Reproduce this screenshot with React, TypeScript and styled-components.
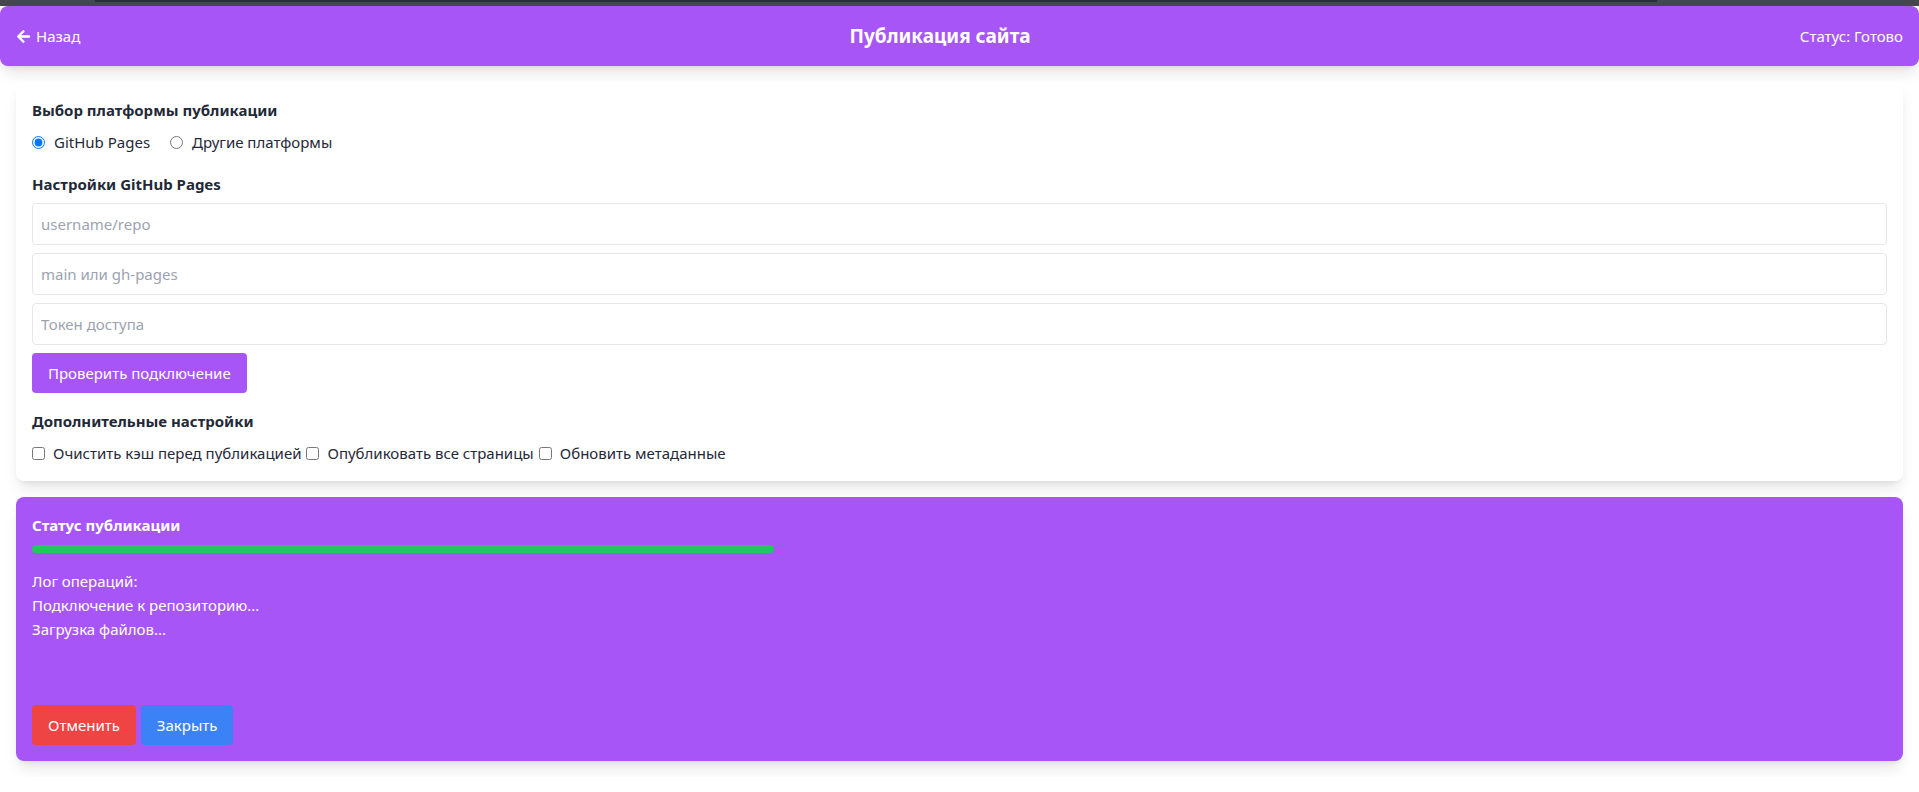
import React from "react";
import styled, { createGlobalStyle } from "styled-components";
import { FaArrowLeft } from "react-icons/fa";

const GlobalStyle = createGlobalStyle`
  html, body { margin: 0; padding: 0; background: #ffffff; }
  body {
    font-family: "Noto Sans", "Open Sans", Arial, sans-serif;
    font-size: 15px;
    line-height: 24px;
    color: #1f2937;
  }
  * { box-sizing: border-box; }
`;

const TopStrip = styled.div`
  height: 6px;
  background: #46464f;
  display: flex;
`;

const TopStripShade = styled.div`
  margin-left: 95px;
  width: 1562px;
  height: 2px;
  background: #2e2e35;
`;

const Header = styled.header`
  height: 60px;
  background: #a855f7;
  color: #ffffff;
  border-radius: 8px;
  padding: 0 16px;
  display: flex;
  align-items: center;
  justify-content: space-between;
  box-shadow: 0 10px 15px -3px rgba(0, 0, 0, 0.1), 0 4px 6px -4px rgba(0, 0, 0, 0.1);
`;

const BackLink = styled.a`
  display: flex;
  align-items: center;
  gap: 5px;
  color: #ffffff;
  text-decoration: none;
  font-size: 15px;
  cursor: pointer;
`;

const Title = styled.h1`
  margin: 0;
  font-size: 19px;
  line-height: 28px;
  font-weight: 700;
`;

const HeaderStatus = styled.div`
  font-size: 15px;
`;

const Main = styled.main`
  padding: 16px;
  display: flex;
  flex-direction: column;
  gap: 16px;
`;

const Card = styled.section<{ $accent?: boolean }>`
  background: ${(p) => (p.$accent ? "#a855f7" : "#ffffff")};
  color: ${(p) => (p.$accent ? "#ffffff" : "#1f2937")};
  border-radius: 8px;
  padding: 16px;
  display: flex;
  flex-direction: column;
  box-shadow: 0 10px 15px -3px rgba(0, 0, 0, 0.1), 0 4px 6px -4px rgba(0, 0, 0, 0.1);
`;

const SectionTitle = styled.h2<{ $mt?: number; $mb?: number }>`
  margin: ${(p) => p.$mt ?? 0}px 0 ${(p) => p.$mb ?? 8}px 0;
  font-size: 15px;
  line-height: 24px;
  font-weight: 700;
`;

const RadioRow = styled.div`
  display: flex;
  align-items: center;
  gap: 20px;
  margin-bottom: 18px;
`;

const OptionLabel = styled.label`
  display: flex;
  align-items: center;
  line-height: 24px;
  cursor: pointer;
`;

const Radio = styled.input.attrs({ type: "radio" })`
  width: 13px;
  height: 13px;
  margin: 0 9px 0 0;
`;

const Fields = styled.div`
  display: flex;
  flex-direction: column;
  gap: 8px;
`;

const TextInput = styled.input`
  height: 42px;
  width: 100%;
  border: 1px solid #e5e7eb;
  border-radius: 4px;
  padding: 0 8px;
  font-family: inherit;
  font-size: 15px;
  color: #1f2937;
  outline: none;
  &::placeholder { color: #9ca3af; }
`;

const Button = styled.button<{ $color: string }>`
  align-self: flex-start;
  height: 40px;
  padding: 0 16px;
  border: none;
  border-radius: 4px;
  background: ${(p) => p.$color};
  color: #ffffff;
  font-family: inherit;
  font-size: 15px;
  line-height: 24px;
  cursor: pointer;
`;

const CheckButton = styled(Button)`
  margin-top: 8px;
`;

const CheckRow = styled.div`
  display: flex;
  align-items: center;
  gap: 5px;
`;

const Checkbox = styled.input.attrs({ type: "checkbox" })`
  width: 13px;
  height: 13px;
  margin: 0 8px 0 0;
`;

const Progress = styled.div`
  margin-top: 8px;
  height: 8px;
  width: 100%;
`;

const ProgressFill = styled.div`
  height: 100%;
  background: #22c55e;
  border-radius: 9999px;
`;

const Log = styled.div`
  margin-top: 16px;
  height: 128px;
  overflow: auto;
`;

const LogLine = styled.div`
  line-height: 24px;
`;

const Actions = styled.div`
  margin-top: 8px;
  display: flex;
  gap: 5px;
`;

export default function App() {
  const progress = 40;
  const logs = ["Лог операций:", "Подключение к репозиторию...", "Загрузка файлов..."];
  return (
    <>
      <GlobalStyle />
      <TopStrip>
        <TopStripShade />
      </TopStrip>
      <Header>
        <BackLink>
          <FaArrowLeft size={15} />
          Назад
        </BackLink>
        <Title>Публикация сайта</Title>
        <HeaderStatus>Статус: Готово</HeaderStatus>
      </Header>
      <Main>
        <Card>
          <SectionTitle>Выбор платформы публикации</SectionTitle>
          <RadioRow>
            <OptionLabel>
              <Radio name="platform" defaultChecked />
              GitHub Pages
            </OptionLabel>
            <OptionLabel>
              <Radio name="platform" />
              Другие платформы
            </OptionLabel>
          </RadioRow>
          <SectionTitle $mb={7}>Настройки GitHub Pages</SectionTitle>
          <Fields>
            <TextInput placeholder="username/repo" />
            <TextInput placeholder="main или gh-pages" />
            <TextInput placeholder="Токен доступа" />
          </Fields>
          <CheckButton $color="#a855f7">Проверить подключение</CheckButton>
          <SectionTitle $mt={16}>Дополнительные настройки</SectionTitle>
          <CheckRow>
            <OptionLabel>
              <Checkbox />
              Очистить кэш перед публикацией
            </OptionLabel>
            <OptionLabel>
              <Checkbox />
              Опубликовать все страницы
            </OptionLabel>
            <OptionLabel>
              <Checkbox />
              Обновить метаданные
            </OptionLabel>
          </CheckRow>
        </Card>
        <Card $accent>
          <SectionTitle $mb={0}>Статус публикации</SectionTitle>
          <Progress>
            <ProgressFill style={{ width: `${progress}%` }} />
          </Progress>
          <Log>
            {logs.map((l) => (
              <LogLine key={l}>{l}</LogLine>
            ))}
          </Log>
          <Actions>
            <Button $color="#ef4444">Отменить</Button>
            <Button $color="#3b82f6">Закрыть</Button>
          </Actions>
        </Card>
      </Main>
    </>
  );
}
